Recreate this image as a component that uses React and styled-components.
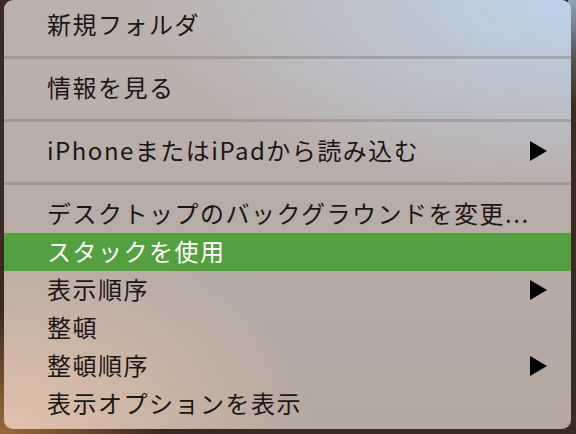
import React from "react";
import styled, { createGlobalStyle } from "styled-components";

const items = [
  { label: "新規フォルダ" },
  { sep: true },
  { label: "情報を見る" },
  { sep: true },
  { label: "iPhoneまたはiPadから読み込む", sub: true },
  { sep: true },
  { label: "デスクトップのバックグラウンドを変更..." },
  { label: "スタックを使用", active: true },
  { label: "表示順序", sub: true },
  { label: "整頓" },
  { label: "整頓順序", sub: true },
  { label: "表示オプションを表示" },
];

const App = () => {
  return (
    <>
      <GlobalStyle />
      <Desktop>
        <Menu>
          {items.map((item, i) =>
            item.sep ? (
              <Separator key={i} />
            ) : (
              <Item key={i} $active={item.active}>
                <Label>{item.label}</Label>
                {item.sub && <Arrow />}
              </Item>
            )
          )}
        </Menu>
      </Desktop>
    </>
  );
};

const GlobalStyle = createGlobalStyle`
  html, body {
    margin: 0;
    padding: 0;
    width: 576px;
    height: 434px;
    overflow: hidden;
  }
  body {
    font-family: "Noto Sans CJK JP", "Noto Sans", sans-serif;
  }
`;

const Desktop = styled.div`
  width: 576px;
  height: 434px;
  box-sizing: border-box;
  padding: 0 5px 5px 4px;
  background:
    linear-gradient(180deg, #8fa5b9 0%, #5d5a5c 12%, rgba(0, 0, 0, 0) 25%) right top / 8px 100% no-repeat,
    radial-gradient(ellipse at 0% 100%, #9a6a3c 0%, rgba(0, 0, 0, 0) 20%),
    #3b2a21;
`;

const Menu = styled.div`
  width: 567px;
  height: 429px;
  box-sizing: border-box;
  padding-top: 6px;
  border-radius: 9px;
  overflow: hidden;
  display: flex;
  flex-direction: column;
  background:
    radial-gradient(ellipse 75% 45% at 100% 0%, #bdd3ea 0%, rgba(189, 211, 234, 0) 100%),
    radial-gradient(ellipse 55% 45% at 0% 100%, #e1c1ac 0%, rgba(225, 193, 172, 0) 100%),
    linear-gradient(180deg, #bbb2ad 0%, #b7ada8 50%, #b3a79f 100%);
`;

const Item = styled.div`
  height: 38px;
  flex: none;
  box-sizing: border-box;
  padding: 0 24px 3px 43px;
  display: flex;
  align-items: center;
  justify-content: space-between;
  color: ${(p) => (p.$active ? "#ffffff" : "#1c1614")};
  background: ${(p) => (p.$active ? "#549f40" : "transparent")};
`;

const Label = styled.span`
  font-size: 24px;
  line-height: 1;
  letter-spacing: 1.5px;
  white-space: nowrap;
`;

const Arrow = styled.span`
  margin-top: 3px;
  width: 0;
  height: 0;
  border-top: 10px solid transparent;
  border-bottom: 10px solid transparent;
  border-left: 17px solid #000;
`;

const Separator = styled.div`
  height: 25px;
  flex: none;
  display: flex;
  align-items: center;

  &::after {
    content: "";
    display: block;
    width: 100%;
    height: 3px;
    margin-top: 2px;
    background: rgba(120, 108, 104, 0.35);
  }
`;

export default App;
